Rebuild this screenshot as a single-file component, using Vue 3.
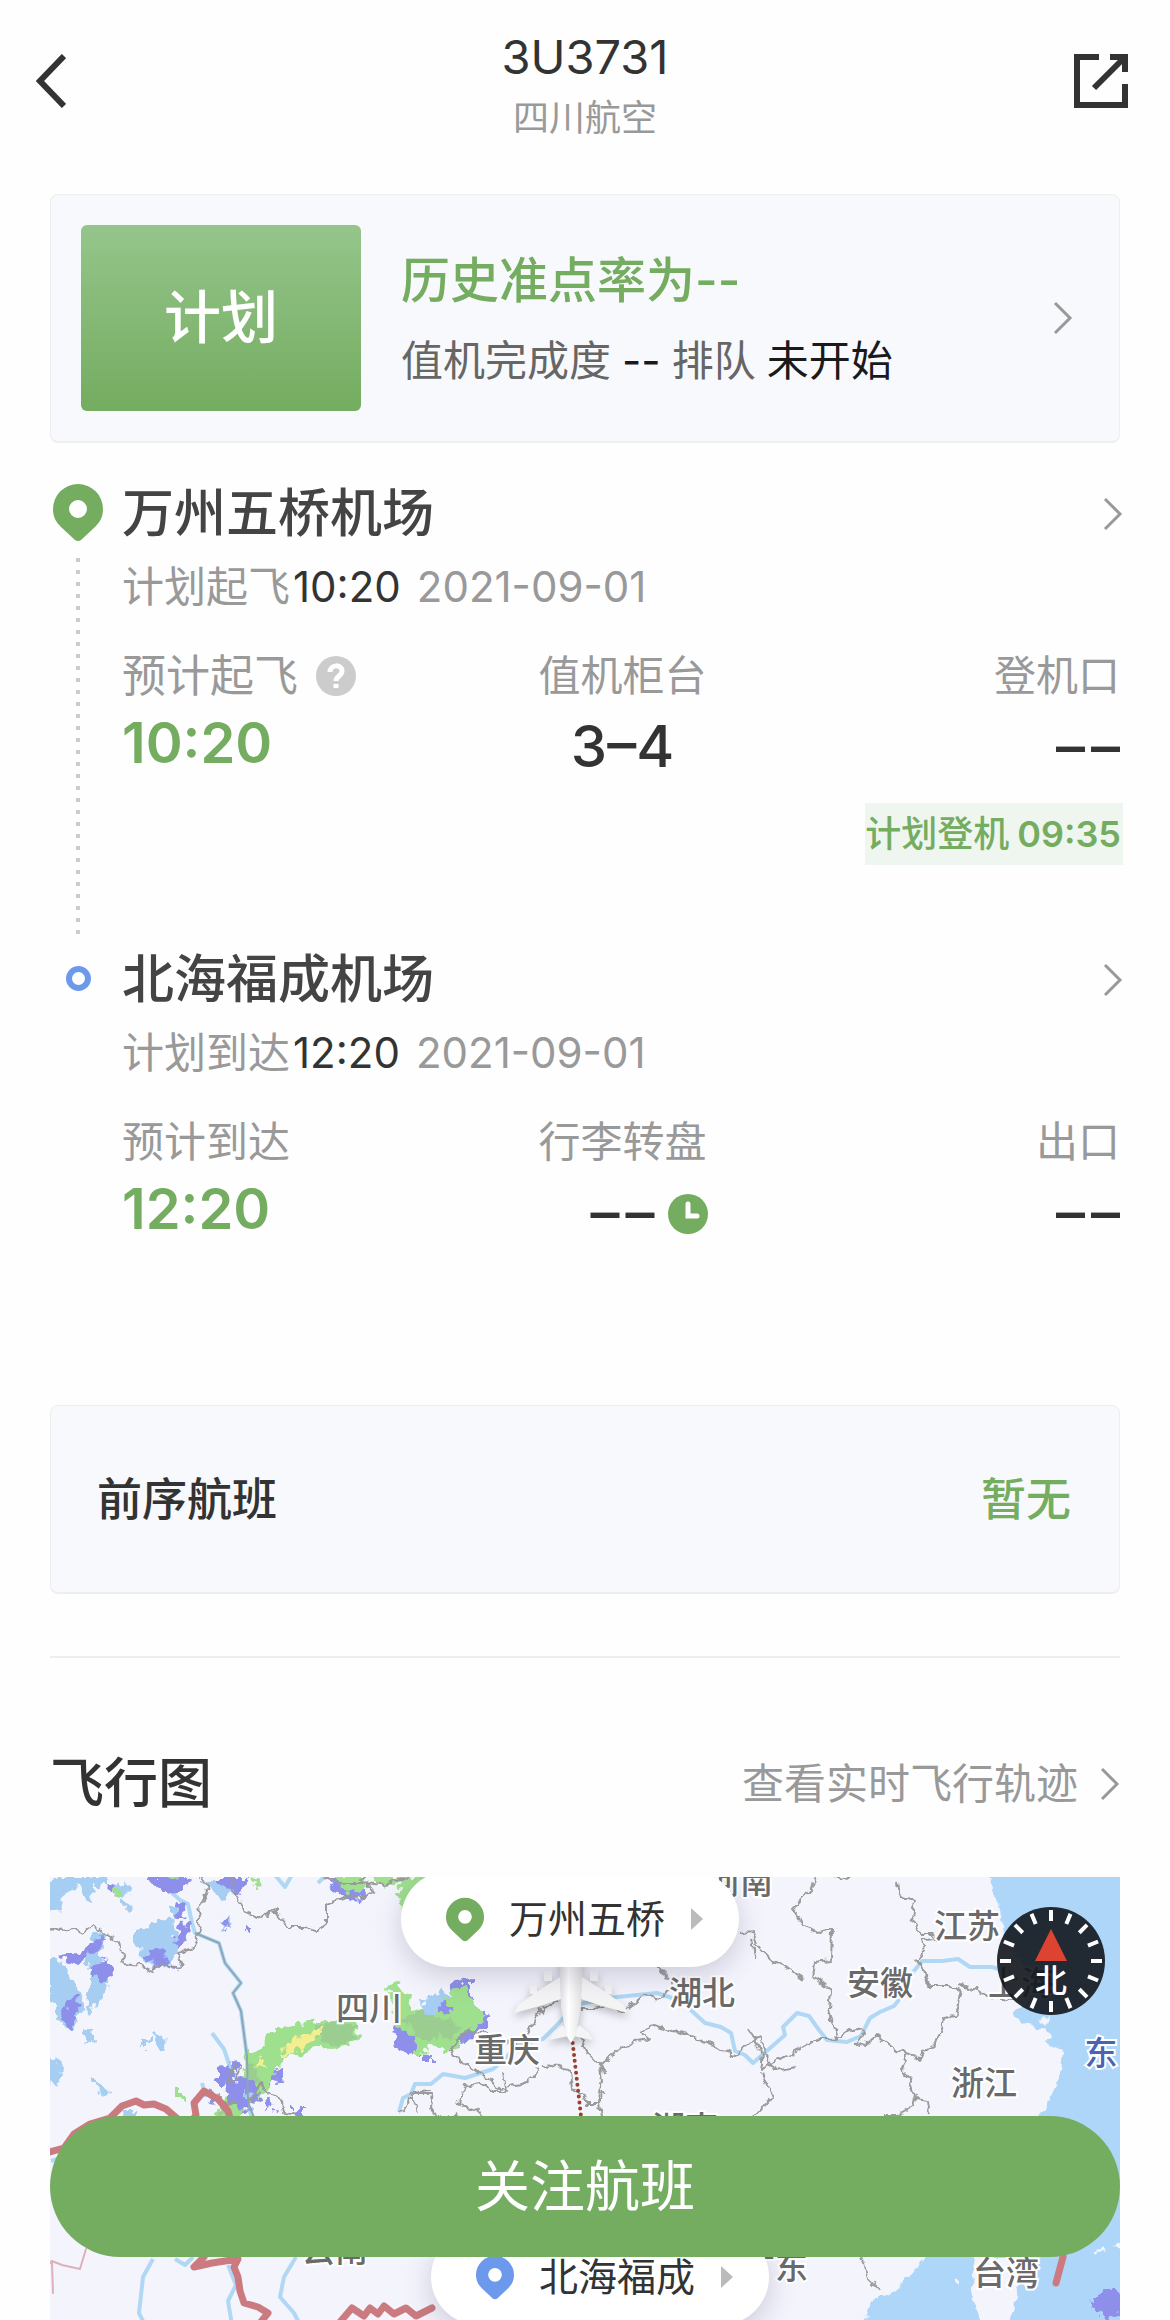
<template>
  <div class="page">
    <header class="topbar">
      <button class="icon-btn" type="button" aria-label="返回">
        <svg width="30" height="54" viewBox="0 0 30 54"><path d="M28 2L4 27l24 25" /></svg>
      </button>
      <div class="topbar-title">
        <h1>3U3731</h1>
        <p>四川航空</p>
      </div>
      <button class="icon-btn" type="button" aria-label="分享">
        <svg width="54" height="54" viewBox="0 0 54 54">
          <path d="M25 3H3v48h48V30M36 3h15v15M50 4L20 34" />
        </svg>
      </button>
    </header>

    <a class="card status" href="#">
      <span class="status-badge">计划</span>
      <span class="status-info">
        <strong>历史准点率为--</strong>
        <span class="status-detail">
          <span>值机完成度</span><b>--</b><span>排队</span><b>未开始</b>
        </span>
      </span>
      <svg class="chevron" viewBox="0 0 20 34"><path d="M2 2l15 15L2 32" /></svg>
    </a>

    <main>
      <section v-for="stop in stops" :key="stop.airport" class="stop" :class="stop.type">
        <div class="rail">
          <svg v-if="stop.type === 'departure'" class="pin" viewBox="0 0 50 57">
            <path fill-rule="evenodd" :d="pinPath" />
          </svg>
          <span v-else class="ring"></span>
          <span v-if="stop.type === 'departure'" class="rail-line"></span>
        </div>
        <div class="stop-body">
          <a class="stop-title" href="#">
            <h2>{{ stop.airport }}</h2>
            <svg class="chevron" viewBox="0 0 20 34"><path d="M2 2l15 15L2 32" /></svg>
          </a>
          <p class="schedule">
            {{ stop.scheduleLabel }}<time>{{ stop.time }}</time><span class="date">{{ stop.date }}</span>
          </p>
          <div class="metrics">
            <div v-for="m in stop.metrics" :key="m.label" class="metric">
              <div class="metric-label" :class="{ 'with-help': m.help }">
                {{ m.label }}
                <svg v-if="m.help" class="help" viewBox="0 0 40 40">
                  <circle cx="20" cy="20" r="20" />
                  <path d="M14 16c0-8 12-8 12-1 0 5-6 5-6 10M20 28v4" />
                </svg>
              </div>
              <div class="metric-value" :class="{ green: m.green }">
                <span v-if="m.value">{{ m.value }}</span>
                <span v-else class="empty"><span>–</span><span>–</span></span>
                <svg v-if="m.clock" class="clock" viewBox="0 0 40 40">
                  <circle cx="20" cy="20" r="20" />
                  <path d="M20 10v12h9" />
                </svg>
              </div>
              <div v-if="m.note" class="note">{{ m.note }}<span>{{ m.noteTime }}</span></div>
            </div>
          </div>
        </div>
      </section>

      <section class="card previous">
        <h3>前序航班</h3>
        <span>暂无</span>
      </section>

      <hr />

      <section class="map-head">
        <h2>飞行图</h2>
        <a href="#">
          查看实时飞行轨迹
          <svg class="chevron" viewBox="0 0 20 34"><path d="M2 2l15 15L2 32" /></svg>
        </a>
      </section>
    </main>

    <section class="map">
      <svg class="map-canvas" viewBox="0 0 1070 443" preserveAspectRatio="xMidYMin slice">
        <defs>
          <filter id="rough" x="-5%" y="-5%" width="110%" height="110%">
            <feTurbulence type="fractalNoise" baseFrequency="0.12" numOctaves="2" seed="4" />
            <feDisplacementMap in="SourceGraphic" scale="9" xChannelSelector="R" yChannelSelector="G" />
          </filter>
          <filter id="patchy" x="-5%" y="-5%" width="110%" height="110%">
            <feTurbulence type="fractalNoise" baseFrequency="0.12" numOctaves="2" seed="9" />
            <feDisplacementMap in="SourceGraphic" scale="16" xChannelSelector="R" yChannelSelector="G" />
          </filter>
          <linearGradient id="fuselage">
            <stop offset="0" stop-color="#dcdce0" />
            <stop offset=".4" stop-color="#ffffff" />
            <stop offset="1" stop-color="#dededf" />
          </linearGradient>
        </defs>

        <!-- 海洋 -->
        <g class="sea" filter="url(#rough)">
          <path d="M937-5l12 32 4 30 20 30 8 38-18 8 5 10 14 4 12 18 20 10-2 20-8 18-10 22-20 22-4 30-40 40-24 20-45 50-18 18-22 8-5 20-36 18-45 10-30 4-12 10h400V-5z" />
          <path class="island" d="M925 380h50l-6 30-10 36h-28l-10-30zM988 142l12-2-2 8zM984 154l12-2 6 8-8 4zM1045 374l8-4 4 6zM1062 370l8-6v8zM904 400l5 2v6z" />
        </g>

        <!-- 河流 -->
        <g class="river">
          <path d="M110 5l20 18 8 4 4 19 3 10 24 10 6 20 16 20-8 10 8 18 6 46 1 46 6 24" />
          <path d="M162 156l12 16 6 18 8 14M152 206l4 14M1 284l12-4M225-2l10 12 8-14M268 6l10-10" />
          <path d="M349 235l4-14 8-4 4-10 16 0 12-10 22 4 28-9 12-10 12-14 26-6 14-14 18-20 42-8 40-4 24 8 24 22 16 4 10 6 4 18 10 4 8 8 16-14 16-14-2-8 14-14 12 3 10 14 8 10 20 2 14-6 9-18 10-6 14-6 8-10 8-20 12-15 20 0 16-2 12 8 22 0 20 6" />
          <path d="M103 382l-10 18-4 36 6 12M125 382l10 6 8-8M178 388l8 20-8 16 4 24M246 380l-12 20-4 20 14 16 6 12" />
        </g>

        <!-- 降水 -->
        <g filter="url(#patchy)">
          <path class="rain-light" d="M0 0h56v10l-12-2-3 20-7-4-6-16-12 8-6 16-10 4-10-4zM70 2l10 12-6 6-10-8zM72 22l10 10-4 4-10-12zM84 56l14-6 8-8 14 6 8 14-2 16-14 12-14-2-8-12-6-10zM42 58l10-2 1 12-6 8 14 22-8 20-12 16-5-4 4-20 2-18-6 2zM0 82l14 4 14 22 6 24-6 16-14 4-8-12-6-18zM33 152l9 0 2 10-8 4zM-2 178l10 4 4 16-6 12-8-2zM91 162h8v10h-8zM102 158l14 2-2 16-8-6zM43 202l8 2 8 12-8 4zM74 234h10v8h-12zM150 2h44l-6 10-14 12-10-8zM172 44l8-4 2 8-8 4zM380 122l14-10 6 14-12 10zM110 46l12-4 4 20-10 6zM122 28l8-2 0 14-6 4z" />
          <path class="rain-heavy" d="M94 0h44l-3 10-12 8-20-10zM160 0h38l-6 16-14-4zM10 80l20-4 10-10 10-8 6 4-12 14-18 12zM42 88l16-6 6 16-8 8-14-6zM16 124l10-4 3 22-10 8-7-5zM56 6l10 2-2 8zM128 26l8 2-2 14-8-2zM132 46l8 2-4 16-8 8-4-6zM98 74l14-6 8 14-14 8-10-7zM120 84l8 4-4 6zM170 44l10-2-2 10zM194 51h10v4h-10zM168 190l10-1 6 12-8 8-8-2zM222 194l12-4-2 14-12 4zM280 2l22 2 14 12-10 10-20-8zM213 224l10-1 2 10-10 1zM242 232h12v10l-12-2zM400 108l22-8 0 24-16 6zM398 146l38-12 0 16-24 18-12-4zM346 146l14 4 10 26-8 4-12-6-6-12zM370 178h14v6h-14z" />
          <path class="rain-green" d="M112-2h18l-6 6zM64 12l6 0 3 7-6 2zM204 2l10 4-8 6zM284-2h34l-6 14-16 6zM318-2h34l-14 12-14-4zM348-2h54l-16 18-36 14zM198 176l14-6 4-14 14-4 26-6 14-3 16 2 20-2 4 12-12 12-34 6-12 4-16 4-12 12-2 12-8 14-12 4-14 16-12 4 4 14-14 8-14-14 14-14 10-20 14-6zM338 108l8-1 10 6 8 20 26-4 12-16 14-6 5 14 6 10 8 8-8 12-14 4-4 14-16 4-12-6-12 12-8-4 0-16-14-10zM126 214h6v8h-6z" />
          <path class="rain-mid" d="M262 148l30-3 16 4-6 14-12 4-20-2zM352 140l26-6 14 8-6 20-20 0zM196 188l10-4 2 20-10 4zM384 148l20-10 4 14-12 12zM170 226l10 2 0 12-10-2z" />
          <path class="rain-heavy" d="M178 206l12-8 14 10 6 14-12 12-18-4zM388 126l8-2 4 10-10 2zM156 214l10 4-4 12zM180 186l8-2-2 12zM352 160l14 0 0 14-10 2z" />
          <path class="rain-light" d="M196 214l8 4 0 12-8-2zM368 128l14-8 8 10-12 10z" />
          <path class="rain-yellow" d="M228 176l12-4 2-12 12-2 20-9-10 14-14 8-8 8-12 0zM206 188l6-6 7 8z" />
          <path class="rain-heavy" d="M1040 425l20-14 14 4v20l-18 8z" />
        </g>

        <!-- 省界 -->
        <path class="border on-river" d="M145 56l24 10 6 20 16 20-8 10 8 18 6 46 1 46 10 24" />
        <g class="border" filter="url(#rough)">
          <path d="M0 52l10 2 12-2 12 4 10-8 16 12 10 6 4 20 16 2 12 6 10-8 12 4 8-1-4-12 16-6 6-20-2-18 8-12 3-12-8-10-2-16" />
          <path d="M200 226l10-20 8 10 14 8 2 12 14 2M185 188l-8 18 10-4 4-12M166 218l10 10 8-4" />
          <path d="M180 0l4 16 12 18 16 8 12-10 14 18 16 0 14 6 8-10 0-18 14-6 10-4 14 4 10-6-12-14 8-6M272 0l20 6 22 0 20 2 24-8" />
          <path d="M368 235l-8-20 20-2M350 236l14-20 18 0-2 14 14 16 12-10 8 12M412 184l-12-8 12-18 8-4 14 2 16 8 16 4 14-16 14-22 14-6M412 184l14 10 14 8 10 10 20-4 14-8 4-16M428 205l-14 4-6 18 22 8 8 14M428 205l16 10 12 0-4-18M492 188l16 2 12 4 2 18 10 4 4 10 14 0 2-12 4 2M530 132l14 0 14-4 16 6 20-16 16 4 12-14-12-18-20-8M530 160l8 16 12 12 4 8M550 190l16-16 20-10 14-2-10-8 14-6 20 6 26 8 14 6 20 10 14-10 12-8 4 16 12 18 20-4" />
          <path d="M550 190l2 14-4 16 3 20M712 196l6 14 4 10-10 12-14 10M688 56l14-2 4 14 16 16 18 8 16 12M766 0l-4 12-20 20 12 16 14 8 14-3-1 30-16 2-2 14 18 14-2 20 10 30M705 82l-4-20M700 152l12 26-2 14 14-8 16-6 14-8 14-8 20 0 12-8 10-3 4 6-8 10 8 2 12-10 20 14 14 4 8 6 4-8 12-8 8-14 2-12 12-2 6-26-14-4-18 0-6-14-8-10 8-12-2-10 14-1-4-5h-10l-10-16 2-18-14-4-2-14" />
          <path d="M858 177l-6 14 8 12 6 16-2 10-18 10-12 0M866 222l12 2 2 14M908 108l14 2 16 10 26 2M812 380l6 22 12 12M784 0l8 4 8-5" />
        </g>

        <!-- 国界 -->
        <g class="frontier">
          <path d="M0 275l14-4 10-14 16-10 20-6 12-12 14-5 8 4 10-1 12 5 14 12 12 0 4-6-2-12 10-12 14 8 10 12 4 14" />
          <path d="M154 380l-10 10 18-4 26-4-4 8 4 10 2 14 4 12 14 4 10 6-8 10 4 14M290 445l12-14 12 8 6-8 8 6 6-8 10 8 12-6 10 8 16-8" />
          <path class="thin" d="M36 372l-6 20-18-4-10-4-4 4M2 386l1 30" />
          <path d="M1013 380l-7 26" />
        </g>

        <path class="route" d="M522 160l10 88 10 110" />

        <g class="labels">
          <text v-for="p in places" :key="p.name" :x="p.x" :y="p.y" :class="p.kind">{{ p.name }}</text>
        </g>

        <g class="plane">
          <path d="M510 100l-22 14-20 14-4 8 26-7 24-8zM532 100l22 14 20 14 4 8-26-7-24-8z" />
          <path d="M513 148l-10 8-4 7 20-4zM529 148l10 8 4 7-20-4z" />
          <path d="M494 94h8v10h-8zM540 94h8v10h-8zM480 108h7v9h-7zM555 108h7v9h-7z" />
          <path fill="url(#fuselage)" d="M509 80h24l-2 50-5 28-5 8-5-8-5-28z" />
        </g>
      </svg>

      <button class="pill pill-from" type="button">
        <svg class="pin" viewBox="0 0 50 57"><path fill-rule="evenodd" :d="pinPath" /></svg>
        万州五桥
        <svg class="arrow" viewBox="0 0 12 22"><path d="M0 0l12 11L0 22z" /></svg>
      </button>
      <button class="pill pill-to" type="button">
        <svg class="pin" viewBox="0 0 50 57"><path fill-rule="evenodd" :d="pinPath" /></svg>
        北海福成
        <svg class="arrow" viewBox="0 0 12 22"><path d="M0 0l12 11L0 22z" /></svg>
      </button>

      <svg class="compass" viewBox="-54 -54 108 108">
        <circle r="54" />
        <line v-for="n in 16" :key="n" y1="-51" y2="-40" :transform="`rotate(${n * 22.5})`" />
        <path d="M0-32L16 0h-32z" />
        <text y="31">北</text>
      </svg>
    </section>

    <button class="follow" type="button">关注航班</button>
  </div>
</template>

<script setup>
import { ref } from "vue";

const pinPath =
  "M25 0a25 25 0 0 1 25 25c0 8-3 13-8 18L28 56q-3 2-6 0L8 43C3 38 0 33 0 25A25 25 0 0 1 25 0zM25 16a9 9 0 1 0 0 18a9 9 0 1 0 0-18z";

// value 为空时显示两个短横
const stops = ref([
  {
    type: "departure",
    airport: "万州五桥机场",
    scheduleLabel: "计划起飞",
    time: "10:20",
    date: "2021-09-01",
    metrics: [
      { label: "预计起飞", value: "10:20", green: true, help: true },
      { label: "值机柜台", value: "3–4" },
      { label: "登机口", value: "", note: "计划登机", noteTime: "09:35" },
    ],
  },
  {
    type: "arrival",
    airport: "北海福成机场",
    scheduleLabel: "计划到达",
    time: "12:20",
    date: "2021-09-01",
    metrics: [
      { label: "预计到达", value: "12:20", green: true },
      { label: "行李转盘", value: "", clock: true },
      { label: "出口", value: "" },
    ],
  },
]);

const places = [
  { name: "四川", x: 319, y: 143 },
  { name: "重庆", x: 457, y: 185 },
  { name: "湖北", x: 652, y: 128 },
  { name: "河南", x: 690, y: 17 },
  { name: "湖南", x: 635, y: 263 },
  { name: "安徽", x: 830, y: 118 },
  { name: "江苏", x: 917, y: 61 },
  { name: "上海", x: 971, y: 118 },
  { name: "浙江", x: 934, y: 218 },
  { name: "云南", x: 285, y: 385 },
  { name: "广东", x: 725, y: 402 },
  { name: "台湾", x: 956, y: 408 },
  { name: "东", x: 1051, y: 188, kind: "ocean" },
];
</script>

<style>
body {
  background: #fefefe;
}
</style>

<style scoped>
.page {
  display: flex;
  flex-direction: column;
  min-height: 100vh;
  padding: 0 50px;
  box-sizing: border-box;
  color: #333;
  font-family: Inter, "Noto Sans CJK SC", sans-serif;
  font-size: 42px;
}

h1,
h2,
h3,
p {
  margin: 0;
  font-weight: 500;
}

a {
  color: inherit;
  text-decoration: none;
}

button {
  border: 0;
  font-family: inherit;
  cursor: pointer;
}

.chevron {
  flex: none;
  width: 20px;
  height: 34px;
  fill: none;
  stroke: #999;
  stroke-width: 3;
}

/* 顶部导航 */
.topbar {
  display: flex;
  justify-content: space-between;
  align-items: center;
  margin: 20px -8px 52px -14px;
}

.icon-btn {
  display: flex;
  width: 58px;
  padding: 0;
  background: none;
}

.icon-btn:last-child {
  justify-content: flex-end;
}

.icon-btn svg {
  fill: none;
  stroke: #333;
  stroke-width: 6;
}

.topbar-title {
  margin-left: 6px;
  text-align: center;
}

.topbar-title h1 {
  font-size: 47px;
  font-weight: 400;
  line-height: 74px;
}

.topbar-title p {
  color: #999;
  font-size: 36px;
  font-weight: 400;
  line-height: 48px;
}

/* 卡片 */
.card {
  display: flex;
  align-items: center;
  border: 1px solid #eee;
  border-bottom-width: 2px;
  border-radius: 8px;
  background: #f8f9fc;
}

.status {
  padding: 30px 46px 30px 30px;
}

.status-badge {
  width: 280px;
  margin-right: 40px;
  border-radius: 6px;
  background: linear-gradient(#95c58b, #74ac60);
  color: #fff;
  font-size: 57px;
  font-weight: 500;
  line-height: 186px;
  text-align: center;
}

.status-info {
  display: flex;
  flex: 1;
  flex-direction: column;
  padding-top: 6px;
}

.status-info strong {
  color: #74ac60;
  font-size: 49px;
  font-weight: 500;
  line-height: 80px;
}

.status-detail {
  display: flex;
  gap: 11px;
  color: #666;
  line-height: 80px;
}

.status-detail b {
  color: #1a1a1a;
  font-weight: 400;
}

/* 航段 */
.stop {
  display: flex;
  gap: 16px;
  margin-right: -3px;
}

.departure {
  margin-top: 33px;
}

.departure .stop-body {
  padding-bottom: 77px;
}

.rail {
  display: flex;
  flex-direction: column;
  align-items: center;
  width: 56px;
  padding: 8px 0;
}

.rail .pin {
  width: 50px;
  height: 57px;
  fill: #74ac60;
}

.rail-line {
  flex: 1;
  width: 4px;
  margin-top: 17px;
  background: repeating-linear-gradient(#ccc 0 4px, transparent 4px 12px);
}

.ring {
  width: 13px;
  height: 13px;
  margin-top: 16px;
  border: 6px solid #6d99ec;
  border-radius: 50%;
}

.stop-body {
  flex: 1;
}

.stop-title {
  display: flex;
  justify-content: space-between;
  align-items: center;
}

.stop-title h2 {
  color: #444;
  font-size: 52px;
  line-height: 76px;
}

.schedule {
  margin: 5px 0 29px;
  color: #999;
  font-weight: 400;
  line-height: 60px;
}

.schedule time {
  margin-left: 3px;
  color: #333;
}

.schedule .date {
  margin-left: 16px;
}

.metrics {
  display: grid;
  grid-template-columns: repeat(3, 1fr);
}

.metric {
  display: flex;
  flex-direction: column;
  align-items: flex-start;
}

.metric:nth-child(2) {
  align-items: center;
}

.metric:nth-child(3) {
  align-items: flex-end;
}

.metric-label {
  display: flex;
  align-items: center;
  gap: 18px;
  color: #999;
  line-height: 60px;
}

.metric-label.with-help {
  font-size: 44px;
}

.metric:nth-child(3) .metric-label,
.metric:nth-child(3) .metric-value {
  padding-right: 3px;
}

.help {
  width: 40px;
  height: 40px;
  fill: #ccc;
}

.help path {
  fill: none;
  stroke: #fff;
  stroke-width: 5;
}

.metric-value {
  position: relative;
  font-size: 58px;
  font-weight: 500;
  line-height: 80px;
}

.metric-value.green {
  color: #74ac60;
  font-size: 56px;
  font-weight: 600;
  line-height: 74px;
}

.empty {
  display: flex;
  gap: 6px;
}

.clock {
  position: absolute;
  top: 50%;
  left: 100%;
  width: 40px;
  height: 40px;
  margin: -18px 0 0 14px;
  fill: #74ac60;
}

.clock path {
  fill: none;
  stroke: #fff;
  stroke-width: 5;
  stroke-linecap: round;
}

.note {
  margin-top: 17px;
  padding-right: 2px;
  background: #eff6f0;
  color: #74ac60;
  font-size: 36px;
  font-weight: 500;
  line-height: 62px;
  white-space: nowrap;
}

.note span {
  margin-left: 8px;
  font-weight: 600;
}

/* 前序航班 */
.previous {
  justify-content: space-between;
  margin-top: 153px;
  padding: 2px 48px 0 46px;
  font-size: 45px;
  line-height: 184px;
}

.previous h3 {
  font-size: 45px;
}

.previous span {
  color: #74ac60;
  font-weight: 500;
}

hr {
  height: 2px;
  margin: 62px 0 90px;
  border: 0;
  background: #eee;
}

.map-head {
  display: flex;
  justify-content: space-between;
  align-items: center;
  margin-bottom: 57px;
}

.map-head h2 {
  font-size: 54px;
  line-height: 72px;
}

.map-head a {
  display: flex;
  align-items: center;
  gap: 22px;
  color: #999;
  line-height: 60px;
}

/* 地图 */
.map {
  position: relative;
  flex: 1;
  min-height: 440px;
  overflow: hidden;
  background: #f3f4fc;
}

.map-canvas {
  position: absolute;
  width: 100%;
  height: 100%;
}

.sea {
  fill: #aed6f9;
}

.island {
  fill: #f3f4fc;
}

.river,
.border,
.frontier {
  fill: none;
  stroke-linejoin: round;
}

.river {
  stroke: #b0d8f5;
  stroke-width: 4;
}

.border {
  stroke: #9a9a9a;
  stroke-width: 2;
}

.border.on-river {
  stroke: #8ca6b5;
}

.frontier {
  stroke: #cb7b80;
  stroke-width: 7;
  stroke-linecap: round;
}

.frontier .thin {
  stroke: #dfb0b8;
  stroke-width: 2;
}

.rain-light {
  fill: #a6cdf2;
}

.rain-heavy {
  fill: #8d8fea;
}

.rain-green {
  fill: #9fe08f;
}

.rain-mid {
  fill: #9bcd90;
}

.rain-yellow {
  fill: #f3ee90;
}

.route {
  fill: none;
  stroke: #9c3f2c;
  stroke-width: 4;
  stroke-linecap: round;
  stroke-dasharray: 0 6;
}

.labels text {
  fill: #6a6a6a;
  stroke: #fff;
  stroke-width: 4;
  paint-order: stroke;
  font-size: 33px;
  font-weight: 500;
  text-anchor: middle;
}

.labels .ocean {
  fill: #4a64b4;
}

.plane {
  fill: #f4f4f5;
  filter: drop-shadow(0 4px 4px rgba(0, 0, 0, 0.25));
}

.pill {
  position: absolute;
  display: flex;
  align-items: center;
  width: 338px;
  height: 96px;
  padding: 0 36px 0 45px;
  border-radius: 48px;
  background: #fff;
  box-shadow: 0 8px 28px rgba(60, 60, 90, 0.22);
  color: #333;
  font-size: 39px;
  line-height: 96px;
}

.pill .pin {
  width: 38px;
  height: 45px;
  margin-right: 25px;
}

.pill .arrow {
  width: 12px;
  height: 22px;
  margin-left: auto;
  fill: #bbb;
}

.pill-from {
  top: -6px;
  left: 351px;
}

.pill-from .pin {
  fill: #74ac60;
}

.pill-to {
  top: 352px;
  left: 381px;
}

.pill-to .pin {
  fill: #6d99ec;
}

.compass {
  position: absolute;
  top: 30px;
  right: 15px;
  width: 108px;
  height: 108px;
}

.compass circle {
  fill: rgba(18, 22, 28, 0.9);
}

.compass line {
  stroke: #fff;
  stroke-width: 4;
}

.compass path {
  fill: #dc4431;
}

.compass text {
  fill: #fff;
  font-size: 32px;
  font-weight: 500;
  text-anchor: middle;
}

.follow {
  position: fixed;
  right: 50px;
  bottom: 63px;
  left: 50px;
  height: 141px;
  padding: 0;
  border-radius: 71px;
  background: #74ac60;
  color: #fff;
  font-size: 55px;
  line-height: 141px;
}
</style>
